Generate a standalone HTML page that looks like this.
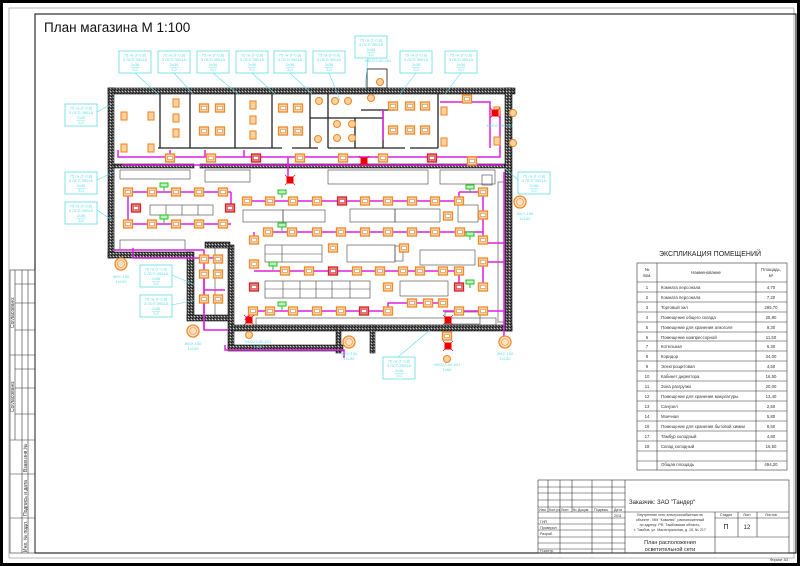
<!DOCTYPE html>
<html><head><meta charset="utf-8"><style>
html,body{margin:0;padding:0;background:#fff;width:800px;height:566px;overflow:hidden}
svg{display:block}
text{font-family:"Liberation Sans",sans-serif}
</style></head><body>
<svg width="800" height="566" viewBox="0 0 800 566" xmlns="http://www.w3.org/2000/svg">
<defs>
<pattern id="hat" width="3" height="3" patternUnits="userSpaceOnUse"><rect width="3" height="3" fill="#5a5a5a"/><rect width="1" height="1" fill="#111"/><rect x="2" y="1" width="1" height="1" fill="#ccc"/><rect x="1" y="2" width="1" height="1" fill="#222"/></pattern>
<g id="L"><rect x="-4.5" y="-4" width="9" height="8" fill="#fcd3a0" stroke="#ef8a2a" stroke-width="1.3"/><rect x="-2.5" y="-1.5" width="5" height="3" fill="#fff" stroke="#a06a30" stroke-width=".4"/></g>
<g id="R"><rect x="-4.5" y="-4" width="9" height="8" fill="#f27b7b" stroke="#d02828" stroke-width="1.3"/><rect x="-2.5" y="-1.5" width="5" height="3" fill="#fff" stroke="#a02020" stroke-width=".4"/></g>
<g id="V"><rect x="-3" y="-6" width="6" height="8" fill="#fcd3a0" stroke="#ef8a2a" stroke-width="1.1"/></g>
<g id="C"><circle r="3.5" fill="#fcd3a0" stroke="#ef8a2a" stroke-width="1.1"/></g>
<g id="G"><rect x="-4" y="-3" width="8" height="4" fill="#bff0bf" stroke="#22c022" stroke-width="1"/><line x1="0" y1="1" x2="0" y2="5" stroke="#22c022"/></g>
<g id="X"><rect x="-3.5" y="-3.5" width="7" height="7" fill="#e00" /><path d="M-5 -5L5 5M5 -5L-5 5" stroke="#e00" stroke-width=".6"/></g>
<g id="E"><circle r="6" fill="#fde0c0" stroke="#ef8a2a" stroke-width="1.3"/><circle r="3.5" fill="none" stroke="#ef8a2a" stroke-width=".6"/></g>
<g id="B"><rect x="0" y="0" width="32" height="22" fill="#fff" stroke="#5fdde6" stroke-width=".8"/><g fill="#5fdde6" font-size="4" text-anchor="middle"><text x="16" y="5.5">75 лк (Г-0,8)</text><text x="16" y="10">3 ЛСП 3901А</text><text x="16" y="15" text-decoration="underline">2х36</text><text x="16" y="20">3,0</text></g></g>
</defs>

<rect x="1.5" y="1.5" width="797" height="563" fill="none" stroke="#000" stroke-width="3"/>
<rect x="9" y="8" width="785" height="550" fill="none" stroke="#888" stroke-width=".6"/>
<rect x="35" y="14" width="761" height="539" fill="none" stroke="#000" stroke-width="1"/>
<g stroke="#333" stroke-width=".6" fill="none">
<rect x="10" y="270" width="25" height="283"/>
<line x1="15" y1="270" x2="15" y2="440"/><line x1="22" y1="270" x2="22" y2="553"/><line x1="28" y1="270" x2="28" y2="553"/>
<line x1="10" y1="355" x2="35" y2="355"/><line x1="10" y1="440" x2="35" y2="440"/>
<line x1="15" y1="284" x2="35" y2="284"/><line x1="15" y1="303" x2="35" y2="303"/><line x1="15" y1="330" x2="35" y2="330"/>
<line x1="15" y1="369" x2="35" y2="369"/><line x1="15" y1="388" x2="35" y2="388"/><line x1="15" y1="414" x2="35" y2="414"/>
<line x1="10" y1="474" x2="35" y2="474"/><line x1="10" y1="518" x2="35" y2="518"/>
</g>
<g font-size="5" fill="#333">
<text transform="translate(14,328) rotate(-90)">Согласовано:</text>
<text transform="translate(14,412) rotate(-90)">Согласовано:</text>
<text transform="translate(27,472) rotate(-90)">Взам.инв.№</text>
<text transform="translate(27,516) rotate(-90)">Подпись и дата</text>
<text transform="translate(27,552) rotate(-90)">Инв. № подл.</text>
</g>

<text x="44" y="32" font-size="13.5" fill="#111">План магазина М 1:100</text>

<g fill="url(#hat)" stroke="#111" stroke-width=".6">
<rect x="108" y="88" width="407" height="6"/>
<rect x="108" y="88" width="6" height="170"/>
<rect x="108" y="252" width="84" height="6"/>
<rect x="187" y="252" width="7" height="68"/>
<rect x="187" y="315" width="45" height="6"/>
<rect x="228" y="245" width="6" height="105"/>
<rect x="228" y="345" width="115" height="6"/>
<rect x="232" y="325" width="280" height="6"/>
<rect x="505" y="88" width="7" height="243"/>
<rect x="370" y="325" width="5" height="28"/>
<rect x="336" y="325" width="5" height="28"/>
<rect x="114" y="164" width="80" height="4"/>
<rect x="200" y="164" width="305" height="4"/>
<rect x="205" y="242" width="25" height="6"/>
</g>
<rect x="367" y="69" width="20" height="19" fill="none" stroke="#111" stroke-width=".8"/>
<g stroke="#222" stroke-width="1.3">
<line x1="160" y1="94" x2="160" y2="148"/><line x1="190" y1="94" x2="190" y2="148"/>
<line x1="235" y1="94" x2="235" y2="148"/><line x1="272" y1="94" x2="272" y2="148"/>
<line x1="310" y1="94" x2="310" y2="148"/><line x1="328" y1="94" x2="328" y2="148"/>
<line x1="355" y1="118" x2="355" y2="148"/><line x1="383" y1="110" x2="383" y2="148"/>
<line x1="438" y1="94" x2="438" y2="148"/>
<line x1="158" y1="148" x2="282" y2="148"/><line x1="292" y1="148" x2="318" y2="148"/><line x1="328" y1="148" x2="405" y2="148"/><line x1="410" y1="148" x2="438" y2="148"/>
<line x1="310" y1="118" x2="383" y2="118"/><line x1="361" y1="110" x2="395" y2="110"/>
</g>
<g stroke="#444" stroke-width=".6" fill="none">
<line x1="114" y1="168" x2="114" y2="250"/>
<rect x="120" y="170" width="70" height="9"/><rect x="205" y="170" width="45" height="12"/><rect x="328" y="170" width="100" height="14"/><rect x="440" y="170" width="55" height="14"/><rect x="482" y="175" width="10" height="10"/>
<rect x="150" y="205" width="63" height="10"/><line x1="166" y1="205" x2="166" y2="215"/><line x1="182" y1="205" x2="182" y2="215"/><line x1="198" y1="205" x2="198" y2="215"/>
<rect x="243" y="210" width="40" height="12"/><rect x="283" y="210" width="42" height="12"/>
<rect x="350" y="209" width="45" height="13"/><rect x="395" y="209" width="45" height="13"/>
<rect x="265" y="245" width="57" height="17"/><line x1="282" y1="245" x2="282" y2="262"/><line x1="265" y1="254" x2="322" y2="254"/>
<rect x="347" y="245" width="48" height="17"/><rect x="395" y="246" width="8" height="15"/>
<rect x="420" y="250" width="55" height="15"/><rect x="265" y="281" width="105" height="17"/><line x1="265" y1="289" x2="370" y2="289"/>
<line x1="283" y1="281" x2="283" y2="298"/><line x1="300" y1="281" x2="300" y2="298"/><line x1="316" y1="281" x2="316" y2="298"/><line x1="332" y1="281" x2="332" y2="298"/><line x1="350" y1="281" x2="350" y2="298"/>
<rect x="400" y="281" width="48" height="15"/><rect x="458" y="205" width="20" height="17"/>
<rect x="498" y="182" width="8" height="140"/><rect x="445" y="312" width="35" height="12"/>
<rect x="256" y="318" width="240" height="7"/><rect x="120" y="240" width="65" height="10"/><rect x="215" y="248" width="14" height="70"/>
</g>

<g stroke="#e020e0" stroke-width="1.5" fill="none">
<polyline points="118,150 118,157 500,157 500,110"/>
<polyline points="170,150 170,157"/><line x1="205" y1="157" x2="205" y2="150"/><line x1="244" y1="157" x2="244" y2="150"/>
<polyline points="122,165 504,165"/>
<polyline points="288,157 288,178"/>
<line x1="128" y1="192" x2="231" y2="192"/><line x1="128" y1="224" x2="231" y2="224"/><line x1="128" y1="192" x2="128" y2="224"/><line x1="231" y1="192" x2="231" y2="208"/>
<line x1="247" y1="201" x2="459" y2="201"/><line x1="459" y1="201" x2="459" y2="192"/><line x1="459" y1="192" x2="483" y2="192"/>
<line x1="268" y1="232" x2="483" y2="232"/><line x1="254" y1="232" x2="254" y2="240"/><line x1="483" y1="192" x2="483" y2="243"/><line x1="483" y1="243" x2="504" y2="243"/>
<line x1="254" y1="271" x2="459" y2="271"/><line x1="483" y1="262" x2="504" y2="262"/><line x1="483" y1="262" x2="483" y2="287"/><line x1="459" y1="271" x2="459" y2="287"/>
<line x1="253" y1="311" x2="388" y2="311"/><polyline points="388,311 388,303 443,303"/><line x1="443" y1="311" x2="483" y2="311"/><line x1="483" y1="311" x2="504" y2="311"/><line x1="504" y1="172" x2="504" y2="335"/>
<polyline points="253,311 245,320"/>
<polyline points="114,250 204,250 204,330"/><line x1="204" y1="290" x2="225" y2="290"/>
<polyline points="504,335 500,346"/>
<polyline points="225,345 225,350 344,350 344,358"/>
<polyline points="133,248 133,258 215,258"/>
<polyline points="204,270 204,330 228,330"/>
<line x1="383" y1="110" x2="383" y2="140"/><polyline points="440,102 490,102 490,148"/>
</g>
<g>
<use href="#V" x="124" y="118"/><use href="#V" x="151" y="118"/><use href="#V" x="124" y="150"/><use href="#V" x="151" y="150"/>
<use href="#V" x="176" y="105"/><use href="#V" x="176" y="120"/><use href="#V" x="176" y="135"/>
<use href="#L" x="204" y="108"/><use href="#L" x="220" y="108"/><use href="#L" x="204" y="131"/><use href="#L" x="220" y="131"/>
<use href="#V" x="253" y="107"/><use href="#V" x="253" y="122"/><use href="#V" x="253" y="137"/>
<use href="#L" x="283" y="108"/><use href="#L" x="298" y="108"/><use href="#L" x="283" y="131"/><use href="#L" x="298" y="131"/>
<use href="#C" x="319" y="101"/><use href="#C" x="335" y="101"/><use href="#C" x="348" y="101"/><use href="#C" x="371" y="98"/><use href="#C" x="380" y="82"/>
<use href="#C" x="337" y="124"/><use href="#C" x="352" y="124"/><use href="#C" x="337" y="138"/><use href="#C" x="352" y="138"/><use href="#C" x="318" y="139"/>
<use href="#L" x="393" y="106"/><use href="#L" x="410" y="106"/><use href="#L" x="425" y="106"/><use href="#L" x="393" y="130"/><use href="#L" x="410" y="130"/><use href="#L" x="425" y="130"/>
<use href="#L" x="467" y="99"/><use href="#V" x="444" y="113"/><use href="#V" x="444" y="144"/><use href="#V" x="497" y="113"/><use href="#V" x="497" y="143"/>
<use href="#C" x="513" y="113"/><use href="#C" x="513" y="143"/>
<use href="#L" x="170" y="158"/><use href="#L" x="211" y="158"/><use href="#R" x="256" y="158"/><use href="#L" x="300" y="158"/><use href="#L" x="343" y="158"/><use href="#L" x="383" y="158"/><use href="#R" x="432" y="158"/><use href="#L" x="472" y="161"/>
<use href="#X" x="364" y="161"/><use href="#X" x="290" y="180"/><use href="#X" x="495" y="113"/>
</g>
<g>
<use href="#L" x="128" y="192"/><use href="#L" x="152" y="192"/><use href="#L" x="176" y="192"/><use href="#L" x="199" y="192"/><use href="#L" x="223" y="192"/>
<use href="#L" x="128" y="224"/><use href="#L" x="152" y="224"/><use href="#L" x="176" y="224"/><use href="#L" x="199" y="224"/><use href="#L" x="223" y="224"/>
<use href="#R" x="136" y="208"/><use href="#R" x="230" y="208"/>
<use href="#L" x="247" y="201"/><use href="#L" x="270" y="201"/><use href="#L" x="293" y="201"/><use href="#L" x="317" y="201"/><use href="#R" x="342" y="201"/><use href="#L" x="365" y="201"/><use href="#L" x="388" y="201"/><use href="#L" x="412" y="201"/><use href="#L" x="435" y="201"/><use href="#L" x="459" y="201"/>
<use href="#L" x="268" y="232"/><use href="#L" x="292" y="232"/><use href="#L" x="317" y="232"/><use href="#L" x="341" y="232"/><use href="#L" x="365" y="232"/><use href="#L" x="388" y="232"/><use href="#L" x="412" y="232"/><use href="#L" x="435" y="232"/><use href="#L" x="460" y="232"/><use href="#L" x="483" y="240"/>
<use href="#L" x="254" y="240"/><use href="#L" x="333" y="248"/><use href="#L" x="404" y="248"/><use href="#L" x="448" y="216"/>
<use href="#L" x="254" y="264"/><use href="#L" x="285" y="271"/><use href="#L" x="309" y="271"/><use href="#R" x="333" y="271"/><use href="#L" x="357" y="271"/><use href="#L" x="380" y="271"/><use href="#L" x="403" y="271"/><use href="#L" x="420" y="271"/><use href="#L" x="443" y="271"/><use href="#L" x="459" y="271"/>
<use href="#L" x="483" y="192"/><use href="#L" x="483" y="215"/><use href="#L" x="483" y="262"/><use href="#L" x="483" y="287"/><use href="#R" x="459" y="287"/><use href="#L" x="388" y="287"/>
<use href="#R" x="254" y="287"/>
<use href="#L" x="253" y="311"/><use href="#L" x="270" y="311"/><use href="#L" x="293" y="311"/><use href="#L" x="317" y="311"/><use href="#L" x="341" y="311"/><use href="#R" x="364" y="311"/><use href="#L" x="388" y="311"/>
<use href="#L" x="412" y="303"/><use href="#L" x="428" y="303"/><use href="#L" x="443" y="303"/><use href="#L" x="459" y="311"/><use href="#L" x="483" y="311"/>
<use href="#L" x="204" y="259"/><use href="#L" x="218" y="259"/><use href="#L" x="204" y="274"/><use href="#L" x="218" y="274"/><use href="#L" x="204" y="299"/><use href="#L" x="218" y="299"/>
<use href="#L" x="447" y="336"/><use href="#X" x="448" y="320"/><use href="#X" x="448" y="346"/><use href="#X" x="249" y="320"/>
<use href="#G" x="164" y="186"/><use href="#G" x="164" y="218"/><use href="#G" x="282" y="193"/><use href="#G" x="282" y="226"/><use href="#G" x="273" y="265"/><use href="#G" x="282" y="305"/><use href="#G" x="470" y="188"/><use href="#G" x="470" y="235"/><use href="#G" x="470" y="283"/>
</g>
<g><use href="#E" x="121" y="264"/><use href="#E" x="193" y="331"/><use href="#E" x="349" y="342"/><use href="#E" x="505" y="342"/><use href="#E" x="520" y="202"/><use href="#C" x="249" y="335"/><use href="#C" x="447" y="359"/></g>

<g stroke="#5fdde6" stroke-width=".6">
<line x1="135" y1="73" x2="158" y2="94"/><line x1="174" y1="73" x2="193" y2="94"/><line x1="213" y1="73" x2="238" y2="94"/><line x1="252" y1="73" x2="275" y2="94"/><line x1="290" y1="73" x2="312" y2="94"/><line x1="329" y1="73" x2="340" y2="100"/><line x1="416" y1="73" x2="400" y2="94"/><line x1="461" y1="73" x2="445" y2="94"/>
<line x1="97" y1="112" x2="112" y2="104"/><line x1="97" y1="180" x2="114" y2="172"/><line x1="97" y1="210" x2="112" y2="220"/><line x1="172" y1="275" x2="195" y2="285"/><line x1="172" y1="305" x2="195" y2="300"/><line x1="518" y1="180" x2="505" y2="168"/><line x1="398" y1="357" x2="430" y2="330"/>
<line x1="370" y1="38" x2="365" y2="88"/>
</g>
<g>
<use href="#B" x="119" y="51"/><use href="#B" x="158" y="51"/><use href="#B" x="197" y="51"/><use href="#B" x="236" y="51"/><use href="#B" x="274" y="51"/><use href="#B" x="313" y="51"/><use href="#B" x="400" y="51"/><use href="#B" x="445" y="51"/>
<use href="#B" x="355" y="36"/>
<use href="#B" x="65" y="104"/><use href="#B" x="65" y="172"/><use href="#B" x="65" y="202"/>
<use href="#B" x="140" y="265"/><use href="#B" x="140" y="295"/><use href="#B" x="518" y="172"/><use href="#B" x="383" y="357"/>
</g>
<g fill="#5fdde6" font-size="4" text-anchor="middle">
<text x="121" y="278">ЖКУ-150</text><text x="121" y="283">1х150</text>
<text x="193" y="345">ЖКУ-150</text><text x="193" y="350">1х150</text>
<text x="258" y="343">НБО23-60-001</text><text x="258" y="348">1х60</text>
<text x="349" y="355">ЖКУ-150</text><text x="349" y="360">1х150</text>
<text x="447" y="366">НБО23-60-001</text><text x="447" y="371">1х60</text>
<text x="505" y="355">ЖКУ-150</text><text x="505" y="360">1х150</text>
<text x="525" y="215">ЖКУ-150</text><text x="525" y="220">1х150</text>
<text x="500" y="127">НБО23-60-001</text><text x="378" y="62">НБО23-60-001</text>
</g>

<text x="710" y="256" font-size="7" text-anchor="middle" fill="#222">ЭКСПЛИКАЦИЯ ПОМЕЩЕНИЙ</text>
<g stroke="#333" stroke-width=".6" fill="none">
<rect x="637" y="263" width="150" height="207"/>
<line x1="657" y1="263" x2="657" y2="470"/><line x1="756" y1="263" x2="756" y2="470"/>
<line x1="637" y1="282" x2="787" y2="282"/>
<line x1="637" y1="292" x2="787" y2="292"/><line x1="637" y1="302" x2="787" y2="302"/><line x1="637" y1="312" x2="787" y2="312"/><line x1="637" y1="322" x2="787" y2="322"/><line x1="637" y1="332" x2="787" y2="332"/><line x1="637" y1="341" x2="787" y2="341"/><line x1="637" y1="351" x2="787" y2="351"/><line x1="637" y1="361" x2="787" y2="361"/><line x1="637" y1="371" x2="787" y2="371"/><line x1="637" y1="381" x2="787" y2="381"/><line x1="637" y1="391" x2="787" y2="391"/><line x1="637" y1="401" x2="787" y2="401"/><line x1="637" y1="411" x2="787" y2="411"/><line x1="637" y1="421" x2="787" y2="421"/><line x1="637" y1="431" x2="787" y2="431"/><line x1="637" y1="441" x2="787" y2="441"/><line x1="637" y1="451" x2="787" y2="451"/><line x1="637" y1="461" x2="787" y2="461"/>
</g>
<g font-size="4.3" fill="#333">
<text x="647" y="271" text-anchor="middle">№</text><text x="647" y="277" text-anchor="middle">пом.</text>
<text x="706" y="274" text-anchor="middle">Наименование</text>
<text x="771" y="271" text-anchor="middle">Площадь,</text><text x="771" y="277" text-anchor="middle">м²</text>
<g text-anchor="middle">
<text x="647" y="289">1</text><text x="647" y="299">2</text><text x="647" y="309">3</text><text x="647" y="319">4</text><text x="647" y="329">5</text><text x="647" y="339">6</text><text x="647" y="348">7</text><text x="647" y="358">8</text><text x="647" y="368">9</text><text x="647" y="378">10</text><text x="647" y="388">11</text><text x="647" y="398">12</text><text x="647" y="408">13</text><text x="647" y="418">14</text><text x="647" y="428">16</text><text x="647" y="438">17</text><text x="647" y="448">18</text>
<text x="771" y="289">4,70</text><text x="771" y="299">7,20</text><text x="771" y="309">295,70</text><text x="771" y="319">25,80</text><text x="771" y="329">9,30</text><text x="771" y="339">11,50</text><text x="771" y="348">6,30</text><text x="771" y="358">34,00</text><text x="771" y="368">4,50</text><text x="771" y="378">16,50</text><text x="771" y="388">20,00</text><text x="771" y="398">13,40</text><text x="771" y="408">2,50</text><text x="771" y="418">5,80</text><text x="771" y="428">8,50</text><text x="771" y="438">4,80</text><text x="771" y="448">16,50</text><text x="771" y="466">494,20</text>
</g>
<text x="661" y="289">Комната персонала</text><text x="661" y="299">Комната персонала</text><text x="661" y="309">Торговый зал</text><text x="661" y="319">Помещение общего склада</text><text x="661" y="329">Помещение для хранения алкоголя</text><text x="661" y="339">Помещение компрессорной</text><text x="661" y="348">Котельная</text><text x="661" y="358">Коридор</text><text x="661" y="368">Электрощитовая</text><text x="661" y="378">Кабинет директора</text><text x="661" y="388">Зона разгрузки</text><text x="661" y="398">Помещение для хранения макулатуры</text><text x="661" y="408">Санузел</text><text x="661" y="418">Моечная</text><text x="661" y="428">Помещение для хранения бытовой химии</text><text x="661" y="438">Тамбур холодный</text><text x="661" y="448">Склад холодный</text><text x="661" y="466">Общая площадь</text>
</g>

<g stroke="#333" stroke-width=".6" fill="none">
<rect x="538" y="480" width="251" height="73"/>
<line x1="625" y1="480" x2="625" y2="553"/>
<line x1="538" y1="487" x2="625" y2="487"/><line x1="538" y1="493" x2="625" y2="493"/><line x1="538" y1="500" x2="625" y2="500"/><line x1="538" y1="507" x2="625" y2="507"/><line x1="538" y1="512" x2="789" y2="512"/><line x1="538" y1="518" x2="625" y2="518"/><line x1="538" y1="524" x2="625" y2="524"/><line x1="538" y1="530" x2="625" y2="530"/><line x1="538" y1="537" x2="789" y2="537"/><line x1="538" y1="543" x2="625" y2="543"/><line x1="538" y1="549" x2="625" y2="549"/>
<line x1="548" y1="480" x2="548" y2="512"/><line x1="560" y1="480" x2="560" y2="553"/><line x1="572" y1="480" x2="572" y2="512"/><line x1="592" y1="480" x2="592" y2="553"/><line x1="612" y1="480" x2="612" y2="553"/>
<line x1="715" y1="512" x2="715" y2="553"/><line x1="738" y1="512" x2="738" y2="537"/><line x1="757" y1="512" x2="757" y2="537"/><line x1="715" y1="518" x2="789" y2="518"/>
</g>
<g font-size="3.6" fill="#333">
<text x="539" y="511">Изм.</text><text x="549" y="511">Кол.уч</text><text x="561" y="511">Лист</text><text x="573" y="511">№ Докум.</text><text x="594" y="511">Подпись</text><text x="614" y="511">Дата</text><text x="614" y="517">2011</text>
<text x="540" y="523">ГИП</text><text x="540" y="529">Проверил</text><text x="540" y="535">Разраб.</text><text x="540" y="552">Н.контр.</text>
<text x="670" y="516" text-anchor="middle">Внутренние сети электроснабжения на</text>
<text x="670" y="521" text-anchor="middle">объекте - ММ "Кавалек", расположенный</text>
<text x="670" y="526" text-anchor="middle">по адресу: РФ, Тамбовская область,</text>
<text x="670" y="531" text-anchor="middle">г. Тамбов, ул. Магистральная, д. 15, № 217</text>
<text x="726" y="516" text-anchor="middle">Стадия</text><text x="747" y="516" text-anchor="middle">Лист</text><text x="771" y="516" text-anchor="middle">Листов</text>
<text x="788" y="561" text-anchor="end">Формат А3</text>
</g>
<text x="629" y="504" font-size="6" fill="#222">Заказчик: ЗАО "Тандер"</text>
<text x="726" y="529" font-size="7" fill="#222" text-anchor="middle">П</text>
<text x="747" y="529" font-size="6" fill="#222" text-anchor="middle">12</text>
<text x="670" y="544" font-size="5.5" fill="#222" text-anchor="middle">План расположения</text>
<text x="670" y="551" font-size="5.5" fill="#222" text-anchor="middle">осветительной сети</text>
</svg>
</body></html>
